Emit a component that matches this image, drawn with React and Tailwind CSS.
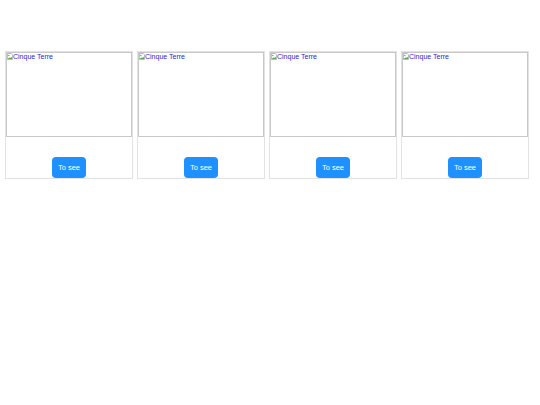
import React from 'react';

const BrokenIcon = () => (
  <svg width="6" height="7" viewBox="0 0 7 8" className="shrink-0">
    <path d="M0.5 0.5h4.5l1.5 1.5v5.5h-6z" fill="#fff" stroke="#9a9a9a" strokeWidth="0.8" />
    <path d="M1 6.8l1.6-2 1.2 1.2 1.2-1.6 1 1.4v1z" fill="#5aa64a" />
    <circle cx="2.2" cy="2.8" r="0.8" fill="#4a8fd8" />
  </svg>
);

function Card() {
  return (
    <div className="w-[128px] h-[128px] border border-[#e2e2e2] flex flex-col">
      <div className="h-[85px] border border-[#c8c8c8] flex items-start">
        <BrokenIcon />
        <span className="text-[7px] leading-[8px] text-[#1f1fd0]">Cinque Terre</span>
      </div>
      <div className="flex-1 flex items-end justify-center">
        <button className="bg-[#1e90ff] text-white text-[7.5px] leading-[8px] rounded-[4px] w-[34px] h-[21px]">
          To see
        </button>
      </div>
    </div>
  );
}

export default function App() {
  return (
    <div className="w-[540px] h-[405px] bg-white pt-[51px] pl-[5px] font-['Liberation_Sans',Arial,sans-serif]">
      <div className="flex gap-[4px]">
        <Card />
        <Card />
        <Card />
        <Card />
      </div>
    </div>
  );
}
